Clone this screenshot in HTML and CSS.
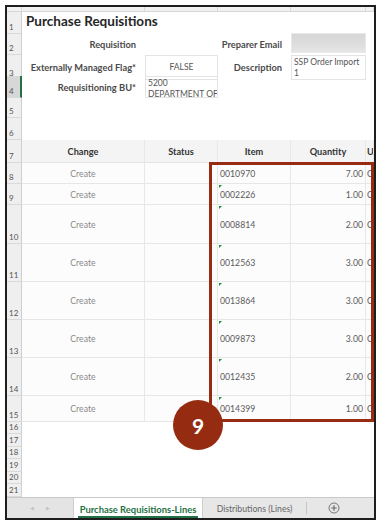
FILE: index.html
```html
<!DOCTYPE html>
<html>
<head>
<meta charset="utf-8">
<link rel="stylesheet" href="styles.css">
</head>
<body>
<div class="frame">
  <div class="row r-strip">
    <div class="c"></div><div class="c"></div><div class="c"></div><div class="c"></div><div class="c"></div><div class="c"></div>
  </div>
  <div class="row r-22">
    <div class="num">1</div>
    <div class="title">Purchase Requisitions</div>
  </div>
  <div class="row r-21">
    <div class="num">2</div>
    <div class="lbl">Requisition</div>
    <div></div>
    <div class="lbl">Preparer Email</div>
    <div class="box box-blur"></div>
  </div>
  <div class="row r-21">
    <div class="num">3</div>
    <div class="lbl">Externally Managed Flag*</div>
    <div class="box box-center">FALSE</div>
    <div class="lbl">Description</div>
    <div class="box box-wrap">SSP Order Import 1</div>
  </div>
  <div class="row r-22">
    <div class="num num-sel">4</div>
    <div class="lbl">Requisitioning BU*</div>
    <div class="box box-wrap box-clip"><span class="ln">5200</span><span class="ln">DEPARTMENT OF</span></div>
  </div>
  <div class="row r-20"><div class="num">5</div></div>
  <div class="row r-22"><div class="num">6</div></div>
  <div class="row r-23 thead">
    <div class="num">7</div>
    <div class="th">Change</div>
    <div class="th">Status</div>
    <div class="th">Item</div>
    <div class="th">Quantity</div>
    <div class="th th-cut">U</div>
  </div>
  <div class="row r-21 tr">
    <div class="num">8</div>
    <div class="td center">Create</div><div class="td"></div>
    <div class="td item">0010970</div><div class="td qty">7.00</div><div class="td cut">C</div>
  </div>
  <div class="row r-21 tr">
    <div class="num">9</div>
    <div class="td center">Create</div><div class="td"></div>
    <div class="td item flag">0002226</div><div class="td qty">1.00</div><div class="td cut">C</div>
  </div>
  <div class="row r-39 tr">
    <div class="num">10</div>
    <div class="td center">Create</div><div class="td"></div>
    <div class="td item flag">0008814</div><div class="td qty">2.00</div><div class="td cut">C</div>
  </div>
  <div class="row r-38 tr">
    <div class="num">11</div>
    <div class="td center">Create</div><div class="td"></div>
    <div class="td item flag">0012563</div><div class="td qty">3.00</div><div class="td cut">C</div>
  </div>
  <div class="row r-38 tr">
    <div class="num">12</div>
    <div class="td center">Create</div><div class="td"></div>
    <div class="td item flag">0013864</div><div class="td qty">3.00</div><div class="td cut">C</div>
  </div>
  <div class="row r-38 tr">
    <div class="num">13</div>
    <div class="td center">Create</div><div class="td"></div>
    <div class="td item flag">0009873</div><div class="td qty">3.00</div><div class="td cut">C</div>
  </div>
  <div class="row r-38 tr">
    <div class="num">14</div>
    <div class="td center">Create</div><div class="td"></div>
    <div class="td item flag">0012435</div><div class="td qty">2.00</div><div class="td cut">C</div>
  </div>
  <div class="row r-26 tr">
    <div class="num">15</div>
    <div class="td center">Create</div><div class="td"></div>
    <div class="td item flag">0014399</div><div class="td qty">1.00</div><div class="td cut">C</div>
  </div>
  <div class="row r-12"><div class="num">16</div></div>
  <div class="row r-13"><div class="num">17</div></div>
  <div class="row r-12"><div class="num">18</div></div>
  <div class="row r-13"><div class="num">19</div></div>
  <div class="row r-12"><div class="num">20</div></div>
  <div class="row r-13"><div class="num">21</div></div>
  <div class="tabs">
    <div class="nav"><span>&#9664;</span><span>&#9654;</span></div>
    <div class="tab active"><span>Purchase Requisitions-Lines</span></div>
    <div class="tab other">Distributions (Lines)</div>
    <div class="sep"></div>
    <div class="add">
      <svg width="12" height="12" viewBox="0 0 12 12"><circle cx="6" cy="6" r="5" fill="none" stroke="#777" stroke-width="1"/><path d="M6 3.3v5.4M3.3 6h5.4" stroke="#666" stroke-width="1.1"/></svg>
    </div>
  </div>
  <div class="highlight"></div>
  <div class="badge">9</div>
</div>
</body>
</html>
```
FILE: styles.css
```css
* { box-sizing: border-box; }
html, body { margin: 0; padding: 0; background: #fff; }
body { font-family: "Lato", "Liberation Sans", sans-serif; }

.frame {
  position: relative;
  margin: 5px 0 0 5px;
  width: 371px;
  height: 515px;
  border: 2px solid #1e1e1e;
  background: #fff;
  overflow: hidden;
}

.row {
  display: grid;
  grid-template-columns: 15px 123px 73px 73px 75px 8px;
}
.r-strip { height: 5px; background: #f1f1f1; border-bottom: 1px solid #d6d6d6; }
.r-strip .c { border-right: 1px solid #d9d9d9; }
.r-12 { height: 12px; }
.r-13 { height: 13px; }
.r-20 { height: 20px; }
.r-21 { height: 21px; }
.r-22 { height: 22px; }
.r-23 { height: 23px; }
.r-26 { height: 26px; }
.r-38 { height: 38px; }
.r-39 { height: 39px; }

.num {
  background: #efefef;
  border-right: 1px solid #cfcfcf;
  border-bottom: 1px solid #d9d9d9;
  color: #555;
  font-size: 8px;
  line-height: 1;
  display: flex;
  align-items: flex-end;
  padding: 0 0 2px 2px;
}
.num-sel { background: #d7d7d7; border-right: 2px solid #217346; }

.title {
  grid-column: 2 / 7;
  font-weight: 700;
  font-size: 13.5px;
  color: #262626;
  padding: 0 0 4px 4px;
  display: flex;
  align-items: center;
}
.lbl {
  font-weight: 700;
  font-size: 9.3px;
  color: #4a4a4a;
  text-align: right;
  padding-right: 9px;
  display: flex;
  align-items: center;
  justify-content: flex-end;
  white-space: nowrap;
}
.box {
  border: 1px solid #e4e4e4;
  font-size: 8.5px;
  color: #555;
  line-height: 11px;
}
.box-center { display: flex; align-items: center; justify-content: center; }
.box-wrap { padding: 1px 1px 0 2px; }
.box-clip { overflow: hidden; }
.ln { display: block; white-space: nowrap; }
.box-blur {
  border-color: #e9e9e9;
  background: linear-gradient(180deg, #d6d6d6, #dedede 60%, #e6e6e6);
  margin: -1px 0 2px 0;
}

.thead > div:not(.num) { background: #f4f4f4; border-bottom: 1px solid #e4e4e4; border-right: 1px solid #e8e8e8; }
.th {
  font-weight: 700;
  font-size: 9.2px;
  color: #333;
  display: flex;
  align-items: center;
  justify-content: center;
  white-space: nowrap;
  overflow: hidden;
}
.th-cut { justify-content: flex-start; padding-left: 1px; }

.td {
  position: relative;
  background: #fcfcfc;
  border-bottom: 1px solid #e6e6e6;
  border-right: 1px solid #e8e8e8;
  font-size: 8.7px;
  color: #5a5a5a;
  display: flex;
  align-items: center;
  white-space: nowrap;
  overflow: hidden;
}
.td.center { justify-content: center; color: #8a8a8a; }
.td.item { padding-left: 2px; }
.td.qty { justify-content: flex-end; padding-right: 2px; }
.td.cut { padding-left: 1px; }
.td.flag::before {
  content: "";
  position: absolute;
  left: 1px;
  top: 1px;
  width: 0;
  height: 0;
  border-top: 3px solid #1d8a3a;
  border-right: 3px solid transparent;
}

.tabs {
  display: flex;
  height: 21px;
  background: #e7e7e7;
  border-top: 1px solid #c9c9c9;
  align-items: stretch;
}
.nav {
  width: 66px;
  display: flex;
  align-items: center;
  justify-content: center;
  gap: 12px;
  color: #c4c4c4;
  font-size: 5px;
  background: #e4e4e4;
}
.tab {
  display: flex;
  align-items: center;
  justify-content: center;
  font-size: 8.7px;
  white-space: nowrap;
}
.tab.active {
  width: 130px;
  background: #fff;
  border-left: 1px solid #cfcfcf;
  border-right: 1px solid #cfcfcf;
  color: #1f7244;
  font-weight: 700;
  font-size: 9.4px;
}
.tab.active span {
  border-bottom: 2px solid #217346;
  padding: 3px 2px 1px;
  margin-top: 2px;
}
.tab.other { width: 103px; color: #666; }
.sep { width: 1px; background: #c6c6c6; margin: 4px 0; }
.add { width: 54px; display: flex; align-items: center; justify-content: center; }

.highlight {
  position: absolute;
  left: 202px;
  top: 155px;
  width: 165px;
  height: 260px;
  border: 3px solid #982b12;
}
.badge {
  position: absolute;
  left: 166px;
  top: 393px;
  width: 50px;
  height: 50px;
  border-radius: 50%;
  background: #952c12;
  color: #fff;
  font-weight: 700;
  font-size: 21px;
  display: flex;
  align-items: center;
  justify-content: center;
}
```
